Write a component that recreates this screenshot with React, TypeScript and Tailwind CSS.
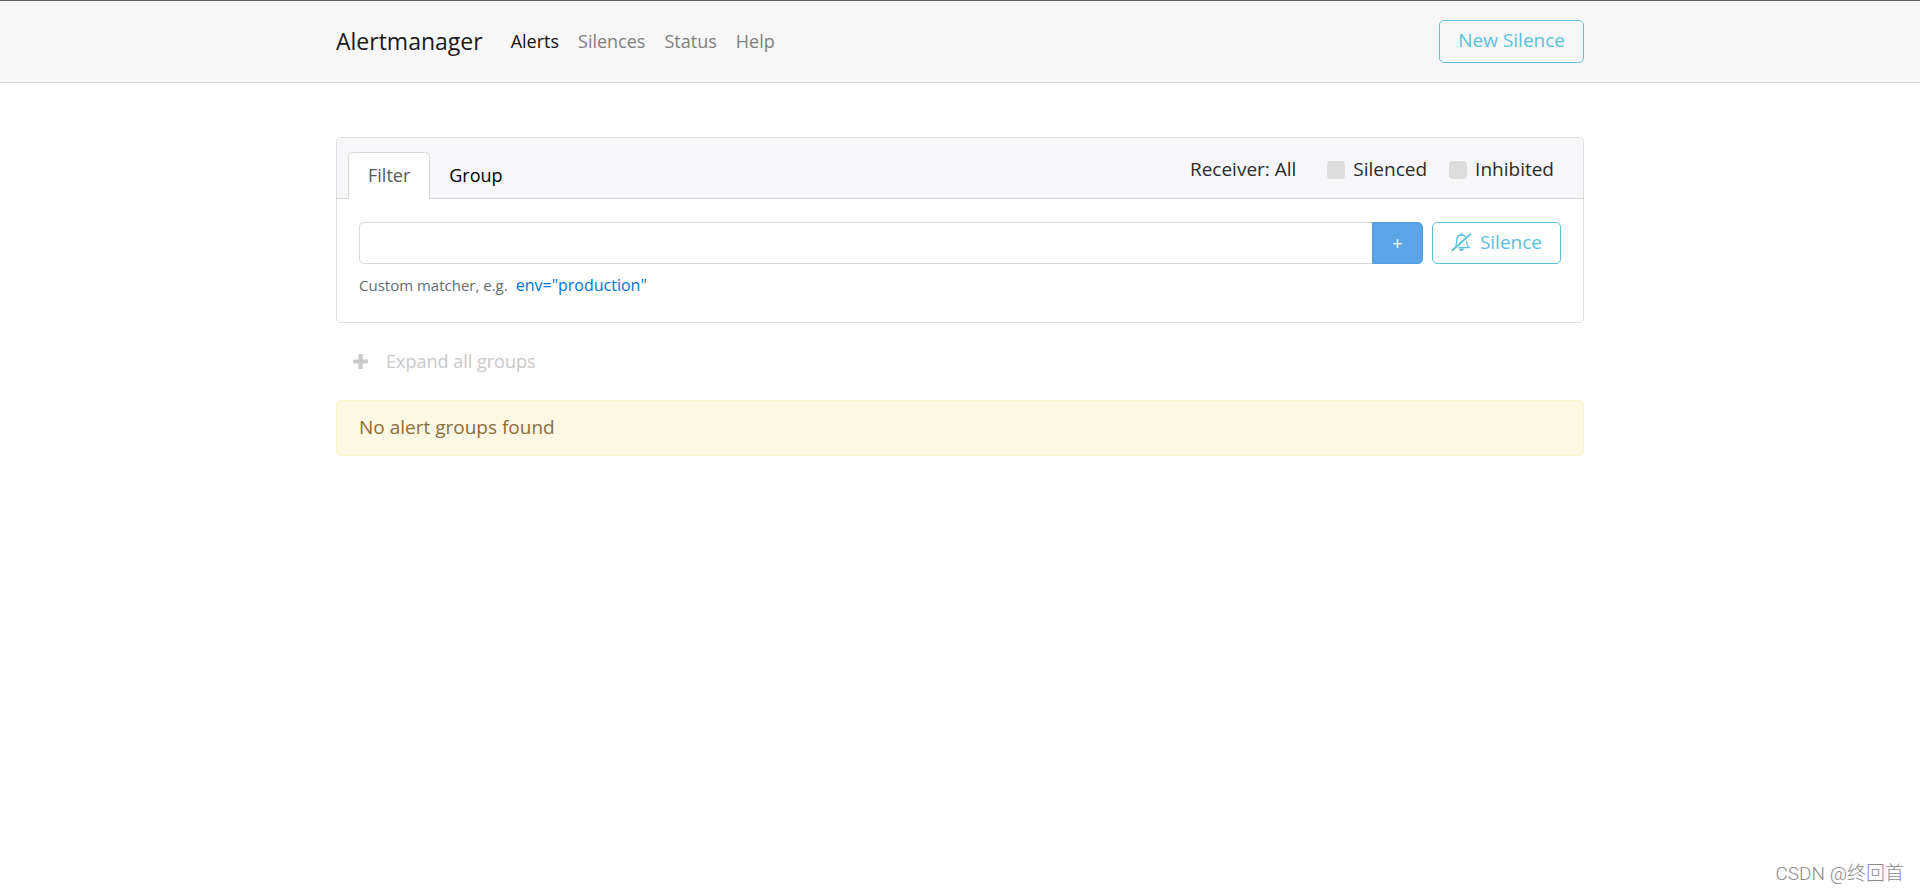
import { useState } from "react";

const navLinks = ["Alerts", "Silences", "Status", "Help"];

function BellSlashIcon() {
  return (
    <svg width="21" height="20" viewBox="0 0 21 20" fill="none" stroke="currentColor" aria-hidden="true">
      <path d="M0.8 18.8 L20.2 1.6" strokeWidth="1.9" />
      <path d="M4.6 13.6 C5.8 11.8 5.9 9.8 5.9 7.6 C5.9 4.8 7.8 3 10.5 3 C12.3 3 13.8 3.7 14.6 5" strokeWidth="1.4" />
      <path d="M15.3 9.2 C15.6 12 16.3 14 18 15.6 H7.2" strokeWidth="1.4" />
      <path d="M10.5 3 V1.2" strokeWidth="1.8" />
      <path d="M8 16.4 H13 C13 17.9 11.9 19 10.5 19 C9.1 19 8 17.9 8 16.4 Z" fill="currentColor" stroke="none" />
    </svg>
  );
}

function PlusIcon() {
  return (
    <svg width="15" height="15" viewBox="0 0 15 15" fill="currentColor" aria-hidden="true">
      <path d="M6.4 0h2.2q1 0 1 1v4.4H14q1 0 1 1v2.2q0 1-1 1H9.6V14q0 1-1 1H6.4q-1 0-1-1V9.6H1q-1 0-1-1V6.4q0-1 1-1h4.4V1q0-1 1-1z" />
    </svg>
  );
}

function CheckOption({ label }: { label: string }) {
  return (
    <label className="flex items-center gap-[8px]">
      <input
        type="checkbox"
        className="size-[18px] appearance-none rounded bg-[#ddd] checked:bg-[#0275d8]"
      />
      {label}
    </label>
  );
}

export default function App() {
  const [matcher, setMatcher] = useState("");

  return (
    <div className="flex min-h-screen flex-col bg-white font-['Open_Sans','Noto_Sans_CJK_SC',sans-serif] text-[18px] leading-[27px] text-[#292b2c]">
      <header className="border-t border-b border-t-[#5f5f64] border-b-[#d5d5d5] bg-[#f7f7f7]">
        <div className="mx-auto flex h-[81px] max-w-[1248px] items-center">
          <a href="#/" className="mr-[28px] text-[23px] text-[#1a1a1a]">
            Alertmanager
          </a>
          <nav className="flex gap-[19px]">
            {navLinks.map((name) => (
              <a
                key={name}
                href={`#/${name.toLowerCase()}`}
                className={name === "Alerts" ? "text-[#111]" : "text-[#808080]"}
              >
                {name}
              </a>
            ))}
          </nav>
          <button className="ml-auto h-[43px] rounded-[5px] border border-[#5bc0de] px-[18px] pb-[2px] text-[19px] text-[#5bc0de]">
            New Silence
          </button>
        </div>
      </header>

      <main className="mx-auto w-full max-w-[1248px] pt-[54px]">
        <section className="rounded-[5px] border border-[#dcdcdd]">
          <div className="flex h-[61px] justify-between rounded-t-[4px] border-b border-[#d6d6d8] bg-[#f7f7f9] px-[11px]">
            <div className="-mb-px flex items-end">
              <button className="h-[47px] rounded-t-[5px] border border-b-0 border-[#d9d9db] bg-white px-[19px] pb-[2px] text-[#55595c]">
                Filter
              </button>
              <button className="h-[47px] px-[19px] pb-px text-black">Group</button>
            </div>
            <div className="flex items-center pt-[3px] pr-[18px] text-[19px]">
              <button className="mr-[31px]">Receiver: All</button>
              <div className="flex gap-[22px]">
                <CheckOption label="Silenced" />
                <CheckOption label="Inhibited" />
              </div>
            </div>
          </div>

          <div className="px-[22px] pt-[23px] pb-[23px]">
            <div className="flex h-[42px]">
              <input
                type="text"
                aria-label="Matcher"
                value={matcher}
                onChange={(e) => setMatcher(e.target.value)}
                className="min-w-0 flex-1 rounded-l-[5px] border border-r-0 border-[#d9d9d9] px-3 outline-none"
              />
              <button
                aria-label="Add matcher"
                className="w-[51px] rounded-r-[5px] border border-[#4f9fe2] bg-[#5ba5e7] text-[18px] text-white"
              >
                +
              </button>
              <button className="ml-[9px] flex items-center gap-[8px] rounded-[5px] border border-[#5bc0de] px-[18px] pb-[2px] text-[19px] text-[#5bc0de]">
                <BellSlashIcon />
                Silence
              </button>
            </div>
            <div className="mt-[8px] flex h-[27px] items-baseline gap-[8px]">
              <span className="text-[15px] text-[#636c72]">Custom matcher, e.g.</span>
              <button className="text-[16px] text-[#0275d8]">env="production"</button>
            </div>
          </div>
        </section>

        <button className="mt-[25px] flex items-center gap-[18px] px-[17px] text-[#c9c9c9]">
          <PlusIcon />
          Expand all groups
        </button>

        <div className="mt-[25px] h-[56px] rounded-[5px] border border-[#faf2cc] bg-[#fcf8e3] px-[22px] py-[13px] text-[19px] text-[#8a6d3b]">
          No alert groups found
        </div>
      </main>

      <footer className="mt-auto pr-[16px] pb-[5px] text-right font-['Roboto','Noto_Sans_CJK_SC',sans-serif] text-[19px] font-light text-[#8c8c8c]">
        CSDN @终回首
      </footer>
    </div>
  );
}
